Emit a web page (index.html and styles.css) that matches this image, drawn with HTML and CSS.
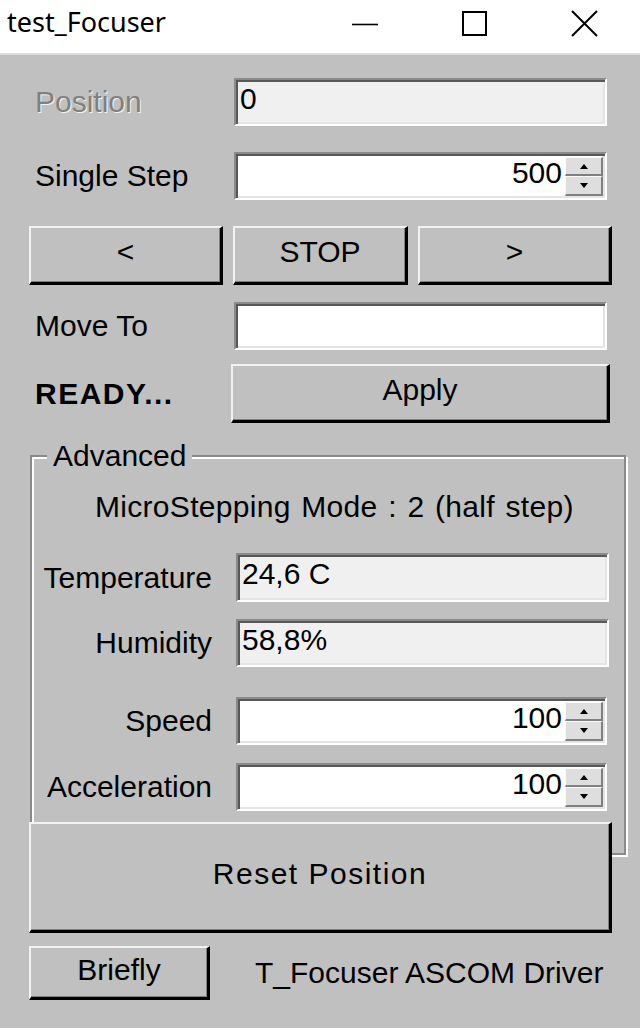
FILE: index.html
```html
<!DOCTYPE html>
<html>
<head>
<meta charset="utf-8">
<title>test_Focuser</title>
<link rel="stylesheet" href="styles.css">
</head>
<body>
<div class="window">
  <header class="titlebar">
    <span class="title">test_Focuser</span>
    <div class="caption">
      <span class="cap-btn">
        <svg width="30" height="30" viewBox="0 0 30 30"><line x1="2" y1="15.5" x2="28" y2="15.5" stroke="#000" stroke-width="1.6"/></svg>
      </span>
      <span class="cap-btn">
        <svg width="30" height="30" viewBox="0 0 30 30"><rect x="3" y="3" width="23" height="23" fill="none" stroke="#000" stroke-width="2"/></svg>
      </span>
      <span class="cap-btn">
        <svg width="30" height="30" viewBox="0 0 30 30"><path d="M2 2 L27 27 M27 2 L2 27" stroke="#000" stroke-width="2" fill="none"/></svg>
      </span>
    </div>
  </header>

  <main class="client">
    <div class="row">
      <span class="lbl disabled">Position</span>
      <div class="field readonly">0</div>
    </div>
    <div class="row gap26">
      <span class="lbl">Single Step</span>
      <div class="field spin">
        <span class="val">500</span>
        <span class="spinner"><span class="sb up"><i class="tri-up"></i></span><span class="sb down"><i class="tri-down"></i></span></span>
      </div>
    </div>

    <div class="btn-row">
      <button class="btn">&lt;</button>
      <button class="btn">STOP</button>
      <button class="btn">&gt;</button>
    </div>

    <div class="row gap17">
      <span class="lbl">Move To</span>
      <div class="field"></div>
    </div>
    <div class="row apply-row">
      <span class="lbl status">READY...</span>
      <button class="btn apply">Apply</button>
    </div>

    <fieldset class="group">
      <legend>Advanced</legend>
      <div class="micro">MicroStepping Mode : 2 (half step)</div>
      <div class="grow g-temp">
        <span class="glbl">Temperature</span>
        <div class="field readonly">24,6 C</div>
      </div>
      <div class="grow g-hum">
        <span class="glbl">Humidity</span>
        <div class="field readonly">58,8%</div>
      </div>
      <div class="grow g-speed">
        <span class="glbl">Speed</span>
        <div class="field spin narrow">
          <span class="val">100</span>
          <span class="spinner"><span class="sb up"><i class="tri-up"></i></span><span class="sb down"><i class="tri-down"></i></span></span>
        </div>
      </div>
      <div class="grow g-acc">
        <span class="glbl">Acceleration</span>
        <div class="field spin narrow">
          <span class="val">100</span>
          <span class="spinner"><span class="sb up"><i class="tri-up"></i></span><span class="sb down"><i class="tri-down"></i></span></span>
        </div>
      </div>
    </fieldset>

    <button class="btn reset">Reset Position</button>

    <div class="footer">
      <button class="btn briefly">Briefly</button>
      <span class="driver">T_Focuser ASCOM Driver</span>
    </div>
  </main>
</div>
</body>
</html>
```

FILE: styles.css
```css
html, body {
  margin: 0;
  padding: 0;
  background: #c0c0c0;
}

body {
  font-family: "Liberation Sans", Arial, sans-serif;
  font-size: 30px;
  color: #000;
}

.window {
  width: 640px;
  height: 1028px;
  overflow: hidden;
  background: #c0c0c0;
}

/* Title bar */
.titlebar {
  height: 53px;
  background: #fff;
  border-bottom: 2px solid #dcdcdc;
  display: flex;
  align-items: flex-start;
}

.title {
  flex: 1;
  font-family: "Noto Sans", "Open Sans", sans-serif;
  font-size: 27px;
  line-height: 44px;
  padding-left: 7px;
  color: #000;
}

.caption {
  display: flex;
}

.cap-btn {
  width: 110px;
  height: 48px;
  display: flex;
  align-items: center;
  justify-content: center;
}

/* Client area */
.client {
  padding: 23px 28px 0 29px;
}

.row {
  display: flex;
  align-items: center;
}

.gap26 { margin-top: 26px; }
.gap17 { margin-top: 17px; }

.lbl {
  width: 205px;
  flex-shrink: 0;
  padding-left: 6px;
  box-sizing: border-box;
  white-space: nowrap;
}

.lbl.disabled {
  color: #808080;
  text-shadow: 1px 1px 0 #f4f4f4;
}

.lbl.status {
  font-weight: bold;
  width: 202px;
  letter-spacing: 1.5px;
}

.field {
  width: 373px;
  height: 48px;
  flex-shrink: 0;
  box-sizing: border-box;
  border: 2px solid;
  border-color: #8a8a8a #fff #fff #8a8a8a;
  box-shadow: inset 2px 2px 0 #585858, inset -2px -2px 0 #e4e4e4;
  background: #fff;
  line-height: 34px;
  padding: 2px 4px 0 4px;
  white-space: nowrap;
}

.field.readonly {
  background: #f0f0f0;
}

.field.spin {
  display: flex;
  align-items: flex-start;
  padding: 2px 2px 2px 4px;
}

.field.spin.narrow {
  width: 371px;
}

.val {
  flex: 1;
  text-align: right;
  padding-right: 3px;
}

.spinner {
  width: 38px;
  margin-top: 1px;
  display: flex;
  flex-direction: column;
}

.sb {
  display: flex;
  align-items: center;
  justify-content: center;
  box-sizing: border-box;
  background: #dedede;
  border-style: solid;
  border-width: 1px 2px 2px 1px;
  border-color: #fafafa #808080 #808080 #fafafa;
}

.sb.up { height: 19px; }
.sb.down { height: 20px; }

.tri-up {
  width: 0;
  height: 0;
  border-left: 4px solid transparent;
  border-right: 4px solid transparent;
  border-bottom: 5px solid #000;
}

.tri-down {
  width: 0;
  height: 0;
  border-left: 4px solid transparent;
  border-right: 4px solid transparent;
  border-top: 5px solid #000;
}

/* Buttons */
.btn {
  background: #c0c0c0;
  border-style: solid;
  border-width: 2px 3px 3px 2px;
  border-color: #f2f2f2 #000 #000 #f2f2f2;
  box-shadow: inset -1px -1px 0 #808080;
  font-family: inherit;
  font-size: 30px;
  color: #000;
  padding: 0 0 6px 0;
  margin: 0;
  box-sizing: border-box;
  line-height: 36px;
  flex-shrink: 0;
}

.btn-row {
  margin-top: 26px;
  display: grid;
  grid-template-columns: 194px 175px 194px;
  column-gap: 10px;
}

.btn-row .btn {
  height: 59px;
}

.apply-row {
  margin-top: 14px;
}

.btn.apply {
  width: 379px;
  height: 59px;
}

/* Group box */
.group {
  margin: 18px -14px 0 1px;
  padding: 0 0 42px 0;
  border: 2px solid #8a8a8a;
  box-shadow: inset 2px 2px 0 #fff, 2px 2px 0 #fff;
  min-width: 0;
}

.group legend {
  margin-left: 15px;
  padding: 0 6px;
  line-height: 30px;
  background: #c0c0c0;
}

.micro {
  margin-top: 16px;
  line-height: 40px;
  padding-left: 63px;
  white-space: nowrap;
  word-spacing: 2px;
  letter-spacing: 0.3px;
}

.grow {
  display: flex;
  align-items: center;
}

.glbl {
  width: 204px;
  flex-shrink: 0;
  padding-right: 24px;
  box-sizing: border-box;
  text-align: right;
  white-space: nowrap;
}

.g-temp { margin-top: 26px; }
.g-temp .field { height: 49px; }
.g-hum { margin-top: 17px; }
.g-speed { margin-top: 30px; }
.g-acc { margin-top: 18px; }

/* Reset button overlaps the group box bottom */
.btn.reset {
  position: relative;
  z-index: 1;
  display: block;
  margin-top: -33px;
  width: 583px;
  height: 111px;
  letter-spacing: 1.5px;
}

.footer {
  margin-top: 13px;
  display: flex;
  align-items: center;
}

.btn.briefly {
  width: 181px;
  height: 54px;
}

.driver {
  margin-left: 45px;
  white-space: nowrap;
}
```
